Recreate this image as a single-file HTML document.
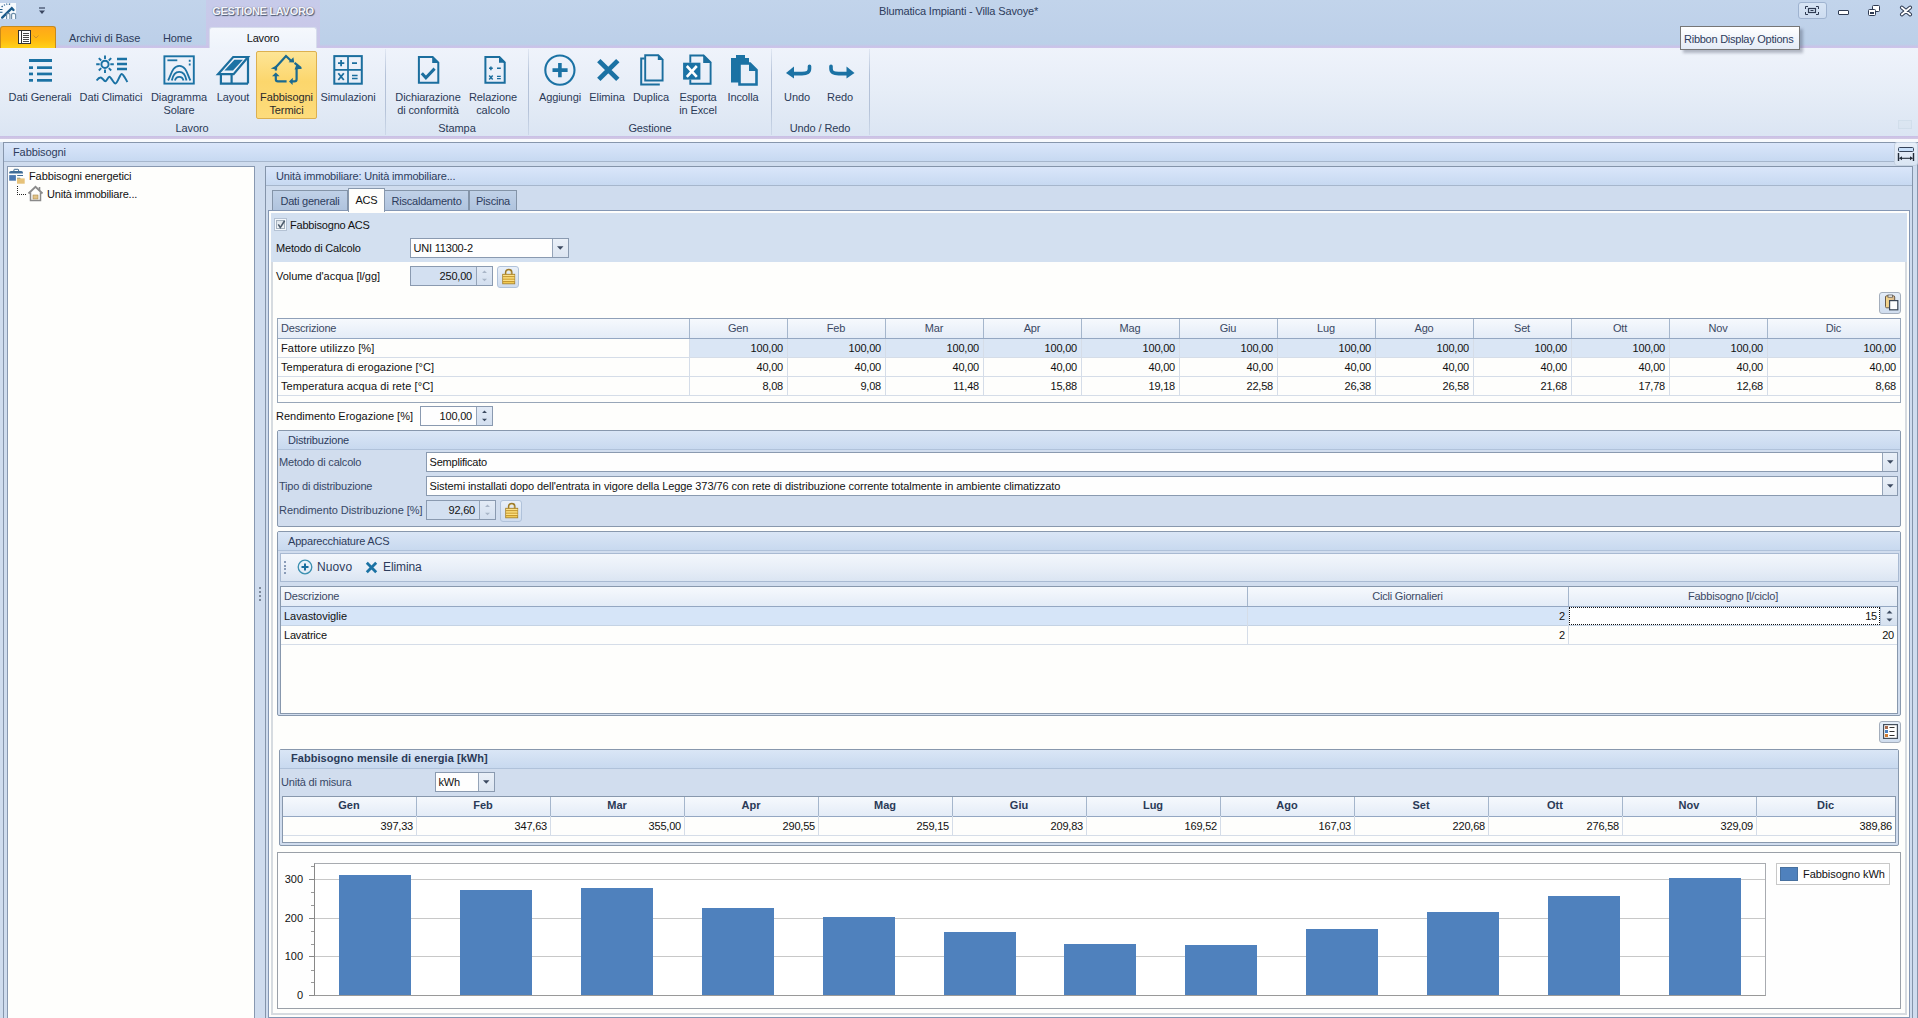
<!DOCTYPE html>
<html><head><meta charset="utf-8">
<style>
*{box-sizing:border-box;margin:0;padding:0}
html,body{width:1918px;height:1018px;overflow:hidden;background:#cfdcee;font-family:"Liberation Sans",sans-serif;font-size:11px;color:#1e1e1e}
.a{position:absolute}
.t{position:absolute;font-size:11px;line-height:13px;white-space:nowrap;letter-spacing:-0.2px;margin-top:1px}
.c{text-align:center}
.r{text-align:right}
.rb{color:#2b3a57;letter-spacing:-0.1px}
svg{position:absolute;overflow:visible}
</style></head><body>
<!-- TITLE BAR -->
<div class="a" style="left:0;top:0;width:1918px;height:48px;background:linear-gradient(#c2d4eb,#bdd0e9 80%,#b9d1e8)"></div>
<!-- contextual group -->
<div class="a" style="left:206px;top:0;width:114px;height:48px;background:linear-gradient(#c7cbea,#cac6e8)"></div>
<div class="t c" style="left:206px;top:4px;width:114px;font-weight:bold;color:#f4f4fa;text-shadow:1px 1px 1px #4a5870,0 0 1px #6a7890;letter-spacing:-0.3px">GESTIONE LAVORO</div>
<!-- app icon -->
<svg style="left:0;top:0" width="17" height="20" viewBox="0 0 17 20">
 <rect x="0" y="3" width="16" height="16" fill="#f6fafd"/>
 <path d="M2.2 17.6L11.8 8.2L13.5 10" stroke="#1a5a8a" stroke-width="2.4" stroke-linecap="round" fill="none"/>
 <path d="M1.6 6.9L2.7 6.1M3.9 5.3L5 4.7M6.4 4.4L7.2 3.8M9.4 4.9L9.6 3.5" stroke="#2a6090" stroke-width="1.3"/>
 <path d="M0 9.5H2.5M0 12.3H2.5" stroke="#1a5a8a" stroke-width="1.1"/>
 <path d="M6.6 19V14.6Q6.6 13.4 8.2 13.4Q9.9 13.4 9.9 14.6V19M11.6 19V14.6Q11.6 13.4 13.3 13.4Q15.6 13.4 15.6 14.6V19" stroke="#6a8aa6" stroke-width="1.1" fill="none"/>
</svg>
<!-- QAT -->
<svg style="left:38px;top:7px" width="8" height="8" viewBox="0 0 8 8"><path d="M1 1H7" stroke="#3a4660" stroke-width="1.2"/><path d="M1 3.5H7L4 7Z" fill="#3a4660"/></svg>
<div class="t rb" style="left:879px;top:4px;color:#2d3c5c;letter-spacing:-0.15px">Blumatica Impianti - Villa Savoye*</div>
<!-- window buttons -->
<div class="a" style="left:1798px;top:2px;width:29px;height:17px;border:1px solid #9fb3d0;border-radius:3px;background:linear-gradient(#d8e5f5,#cddcf0)"></div>
<svg style="left:1805px;top:6px" width="14" height="9" viewBox="0 0 14 9"><path d="M0.5 3V0.5H3 M11 0.5H13.5V3 M13.5 6V8.5H11 M3 8.5H0.5V6" stroke="#2f3b52" stroke-width="1" fill="none"/><rect x="3.5" y="2.5" width="7" height="4" fill="none" stroke="#2f3b52" stroke-width="1.2"/><rect x="5.5" y="4" width="3" height="1" fill="#2f3b52"/></svg>
<div class="a" style="left:1838px;top:10px;width:11px;height:5px;border:1px solid #2f3b52;border-radius:1px;background:#fff"></div>
<svg style="left:1868px;top:5px" width="12" height="11" viewBox="0 0 12 11"><rect x="4.5" y="0.5" width="7" height="6" rx="1" fill="#fff" stroke="#2f3b52"/><rect x="0.5" y="4.5" width="7" height="6" rx="1" fill="#fff" stroke="#2f3b52"/><rect x="2" y="7" width="4" height="2" fill="#2f3b52"/></svg>
<svg style="left:1899px;top:5px" width="14" height="12" viewBox="0 0 14 12"><path d="M2.8 2.5L11.2 9.5M11.2 2.5L2.8 9.5" stroke="#2f3b52" stroke-width="3.8" stroke-linecap="round"/><path d="M2.8 2.5L11.2 9.5M11.2 2.5L2.8 9.5" stroke="#fff" stroke-width="1.8" stroke-linecap="round"/></svg>

<!-- TABS ROW -->
<div class="a" style="left:0;top:26px;width:56px;height:22px;border:1px solid #c78a1c;border-bottom:none;border-radius:3px 3px 0 0;background:linear-gradient(#ffa71a,#ffb910 60%,#ffd21a)"></div>
<svg style="left:18px;top:30px" width="13" height="14" viewBox="0 0 13 14"><rect x="0.5" y="0.5" width="12" height="13" fill="#fff" stroke="#333"/><path d="M3.5 1V13" stroke="#333" stroke-width="1"/><path d="M5 3.5H11M5 5.5H11M5 7.5H11M5 9.5H11M5 11.5H11" stroke="#333" stroke-width="0.9"/></svg>
<svg style="left:33px;top:35px" width="6" height="4" viewBox="0 0 6 4"><path d="M0.5 0.5L3 3L5.5 0.5" stroke="#c88a30" stroke-width="0.9" fill="none"/></svg>
<div class="t rb" style="left:69px;top:31px;color:#2d3c5c">Archivi di Base</div>
<div class="t rb" style="left:163px;top:31px;color:#2d3c5c">Home</div>
<div class="a" style="left:56px;top:44px;width:1862px;height:4px;background:linear-gradient(rgba(200,190,232,0),#cbc2e8 70%,#cfc6ea)"></div>
<div class="a" style="left:209px;top:27px;width:108px;height:22px;border:1px solid #d6dcec;border-bottom:none;border-radius:3px 3px 0 0;background:linear-gradient(#f5f8fd,#eef3fb)"></div>
<div class="t c" style="left:209px;top:31px;width:108px;color:#111">Lavoro</div>

<!-- RIBBON BODY -->
<div class="a" style="left:0;top:48px;width:1918px;height:88px;background:linear-gradient(#eff3fb,#e6edf7 50%,#dbe5f3)"></div>
<div class="a" style="left:0;top:136px;width:1918px;height:3px;background:linear-gradient(#c9bfe6,#d3c9e4)"></div>
<div class="a" style="left:0;top:139px;width:1918px;height:3px;background:#f8fafd"></div>
<div class="a" style="left:1898px;top:120px;width:14px;height:9px;border:1px solid rgba(150,175,200,0.12);background:rgba(200,220,230,0.15)"></div>
<!-- ribbon buttons -->
<div class="a" style="left:256px;top:51px;width:61px;height:68px;border:1px solid #dcb050;border-radius:2px;background:linear-gradient(#fde596,#fcd66c 45%,#fddc7c)"></div>
<g></g>
<!-- Dati Generali -->
<svg style="left:28px;top:58px" width="25" height="25" viewBox="0 0 25 25" fill="#1b72a4">
<rect x="1" y="1" width="23" height="3"/><rect x="1" y="8.3" width="4" height="2.7"/><rect x="9" y="8.3" width="15" height="2.7"/>
<rect x="1" y="14.6" width="4" height="2.7"/><rect x="9" y="14.6" width="15" height="2.7"/><rect x="1" y="21" width="4" height="2.7"/><rect x="9" y="21" width="15" height="2.7"/></svg>
<div class="t c rb" style="left:0;top:90px;width:80px">Dati Generali</div>
<!-- Dati Climatici -->
<svg style="left:95px;top:54px" width="34" height="32" viewBox="0 0 34 32" fill="none" stroke="#1b72a4">
<circle cx="10" cy="10.3" r="3.6" stroke-width="2"/>
<path d="M10 1.5V5M10 15.5V19M1.2 10.3H4.7M15.3 10.3H18.8M3.8 4.1L6.2 6.5M13.8 14.1L16.2 16.5M3.8 16.5L6.2 14.1M13.8 6.5L16.2 4.1" stroke-width="1.9"/>
<path d="M22 5H32M22 10H32M22 15H32" stroke-width="2.3"/>
<path d="M1.6 26.5C3.5 24 5 23.3 6.3 23.7S9 27.3 10.3 27.3S13 22.7 14.5 22.8S18.5 29.5 20.5 29.5S25 19.8 26.7 19.9S30.5 25 32.4 28" stroke-width="2"/></svg>
<div class="t c rb" style="left:75px;top:90px;width:72px">Dati Climatici</div>
<!-- Diagramma Solare -->
<svg style="left:163px;top:55px" width="32" height="31" viewBox="0 0 32 31" fill="none" stroke="#1b72a4">
<rect x="1.4" y="1.3" width="29.4" height="27.3" stroke-width="1.9"/>
<path d="M4.4 5.3H14.3" stroke-width="1.8"/><path d="M26.7 4.7V6.7M26.7 8.6V10.6" stroke-width="1.8"/>
<path d="M5.1 25.5C8 20 9.5 10.8 16.4 10.8S24.5 20 27.4 25.5M8.8 25.5C10 19.5 12.5 16.8 16.2 16.8S22.5 19.5 23.5 25.5M11.9 25.5C12.5 23.5 14 21.9 16.2 21.9S20 23.5 20.5 25.5" stroke-width="1.8"/></svg>
<div class="t c rb" style="left:139px;top:90px;width:80px">Diagramma</div>
<div class="t c rb" style="left:139px;top:103px;width:80px">Solare</div>
<!-- Layout -->
<svg style="left:213px;top:50px" width="40" height="40" viewBox="0 0 40 40" fill="none" stroke="#1b6e9e" stroke-width="2.2">
<path d="M5 24.2L20.2 7H35L20.6 24.2Z" stroke-linejoin="miter"/><path d="M11.4 20.6L21.4 9.8H30L20 20.6Z" fill="#1b72a4" stroke="none"/>
<path d="M35 7V33.6M7.9 24.2V33.6H35M18.6 24.2V33.6"/></svg>
<div class="t c rb" style="left:203px;top:90px;width:60px">Layout</div>
<!-- Fabbisogni Termici -->
<svg style="left:266px;top:50px" width="40" height="40" viewBox="0 0 40 40" fill="none" stroke="#1b6a90" stroke-width="2.2">
<path d="M9.6 17.6L20 6L25 10.8"/><path d="M22.6 12.2L28.2 12.6L27.4 7.2Z" fill="#1b6a90" stroke="none"/>
<path d="M4.8 18.6L11 15.2L11.2 19.8Z" fill="#1b6a90" stroke="none"/><path d="M9.8 17V20.6" stroke-width="2"/>
<path d="M28.6 12.8L35 18.2"/><path d="M28.6 19.4L36 18.8L30.8 13.4Z" fill="#1b6a90" stroke="none"/>
<path d="M30.6 18.8V29.2Q30.6 31.4 28.4 31.4H26"/><path d="M23 31.6L26.8 27.8L26.6 35Z" fill="#1b6a90" stroke="none"/>
<path d="M20.6 31.4H12Q9.8 31.4 9.8 29.2V25.4"/><path d="M9.8 22.4L6 26.2H13.6Z" fill="#1b6a90" stroke="none"/></svg>
<div class="t c rb" style="left:256px;top:90px;width:61px;color:#2a2a2a">Fabbisogni</div>
<div class="t c rb" style="left:256px;top:103px;width:61px;color:#2a2a2a">Termici</div>
<!-- Simulazioni -->
<svg style="left:328px;top:50px" width="40" height="40" viewBox="0 0 40 40" fill="none" stroke="#1b6e9e">
<rect x="6.3" y="6.1" width="27.5" height="27.6" stroke-width="2"/><path d="M20 6V33.8M6 19.8H34" stroke-width="1.7"/>
<path d="M10 13.1H16.3M13.1 10V16.3M24 13.1H29" stroke-width="1.8"/><path d="M10.3 23.3L15.8 30M15.8 23.3L10.3 30" stroke-width="1.8"/><path d="M24 25.4H29.6M24 28.4H29.6" stroke-width="1.5"/></svg>
<div class="t c rb" style="left:318px;top:90px;width:60px">Simulazioni</div>
<!-- separators -->
<div class="a" style="left:385px;top:49px;width:1px;height:86px;background:linear-gradient(rgba(170,185,210,0.2),#b4c2d8 30%,#b4c2d8 70%,rgba(170,185,210,0.3))"></div>
<div class="a" style="left:528px;top:49px;width:1px;height:86px;background:linear-gradient(rgba(170,185,210,0.2),#b4c2d8 30%,#b4c2d8 70%,rgba(170,185,210,0.3))"></div>
<div class="a" style="left:771px;top:49px;width:1px;height:86px;background:linear-gradient(rgba(170,185,210,0.2),#b4c2d8 30%,#b4c2d8 70%,rgba(170,185,210,0.3))"></div>
<div class="a" style="left:869px;top:49px;width:1px;height:86px;background:linear-gradient(rgba(170,185,210,0.2),#b4c2d8 30%,#b4c2d8 70%,rgba(170,185,210,0.3))"></div>
<div class="t c rb" style="left:152px;top:121px;width:80px">Lavoro</div>
<!-- Dichiarazione -->
<svg style="left:410px;top:50px" width="40" height="40" viewBox="0 0 40 40" fill="none" stroke="#1b6e9e">
<path d="M8.9 6.9H22.6L28.3 12.6V32.8H8.9Z" stroke-width="2"/><path d="M22.2 6L29.2 13H22.2Z" fill="#1b6e9e" stroke="none"/>
<path d="M11.8 23.2L15.9 27.8L24.6 18.6" stroke-width="3"/></svg>
<div class="t c rb" style="left:388px;top:90px;width:80px">Dichiarazione</div>
<div class="t c rb" style="left:388px;top:103px;width:80px">di conformità</div>
<!-- Relazione -->
<svg style="left:476px;top:50px" width="40" height="40" viewBox="0 0 40 40" fill="none" stroke="#1b6e9e">
<path d="M9.4 7H23.4L28.7 12.5V32.8H9.4Z" stroke-width="2"/><path d="M23 6.1L29.6 12.8H23Z" fill="#1b6e9e" stroke="none"/>
<path d="M13 18.3H16.8M14.9 16.4V20.2M21 18.3H24.8" stroke-width="1.5"/><path d="M13.2 25.6L16.7 29.4M16.7 25.6L13.2 29.4" stroke-width="1.5"/><path d="M21 26.4H24.8M21 28.6H24.8" stroke-width="1.2"/></svg>
<div class="t c rb" style="left:453px;top:90px;width:80px">Relazione</div>
<div class="t c rb" style="left:453px;top:103px;width:80px">calcolo</div>
<div class="t c rb" style="left:417px;top:121px;width:80px">Stampa</div>
<!-- Aggiungi -->
<svg style="left:544px;top:55px" width="32" height="31" viewBox="0 0 32 31" fill="none" stroke="#1b72a4">
<circle cx="15.9" cy="15.1" r="14.6" stroke-width="2.1"/><path d="M8.5 15.1H23.6M15.9 8.1V22.2" stroke-width="3.6"/></svg>
<div class="t c rb" style="left:530px;top:90px;width:60px">Aggiungi</div>
<!-- Elimina -->
<svg style="left:596px;top:58px" width="25" height="24" viewBox="0 0 25 24" stroke="#1b72a4">
<path d="M2.8 2.6L21.8 21.4M21.8 2.6L2.8 21.4" stroke-width="4.8"/></svg>
<div class="t c rb" style="left:577px;top:90px;width:60px">Elimina</div>
<!-- Duplica -->
<svg style="left:636px;top:50px" width="40" height="40" viewBox="0 0 40 40" fill="none" stroke="#1b6e9e">
<path d="M5.2 8.4H8.6M5.2 7.5V34.4H23.8" stroke-width="2"/>
<path d="M9.2 5.3H22.3L26.6 9.6V30.5H9.2Z" stroke-width="1.9"/><path d="M21.8 4.4L27.5 10.1H21.8Z" fill="#1b6e9e" stroke="none"/></svg>
<div class="t c rb" style="left:621px;top:90px;width:60px">Duplica</div>
<!-- Esporta -->
<svg style="left:676px;top:50px" width="40" height="40" viewBox="0 0 40 40" fill="none" stroke="#1b6e9e">
<path d="M14.3 12.8V5.5H27.6L34.6 12.5V33.7H14.3V29.5" stroke-width="1.9"/><path d="M27.2 4.6L35.5 12.9H27.2Z" fill="#1b6e9e" stroke="none"/>
<rect x="7.1" y="12.7" width="17.3" height="16.9" fill="#1b72a4" stroke="none"/>
<path d="M10.8 16L20.8 26.8M20.8 16L10.8 26.8" stroke="#fff" stroke-width="2.6"/></svg>
<div class="t c rb" style="left:668px;top:90px;width:60px">Esporta</div>
<div class="t c rb" style="left:668px;top:103px;width:60px">in Excel</div>
<!-- Incolla -->
<svg style="left:730px;top:54px" width="28" height="32" viewBox="0 0 28 32" fill="none" stroke="#1b72a4">
<path d="M1 4H19V28.5H1Z" fill="#1b72a4" stroke="none"/><rect x="6" y="1" width="9" height="4" fill="#1b72a4" stroke="none"/>
<path d="M9.5 9.5H20L26.5 16V30.5H9.5Z" fill="#e9eff8" stroke-width="2.6"/><path d="M19 9L27 17H19Z" fill="#1b72a4" stroke="none"/></svg>
<div class="t c rb" style="left:713px;top:90px;width:60px">Incolla</div>
<div class="t c rb" style="left:610px;top:121px;width:80px">Gestione</div>
<!-- Undo -->
<svg style="left:785px;top:64px" width="28" height="15" viewBox="0 0 28 15" fill="#1b72a4">
<path d="M24.5 2.3V4.5C24.5 8.5 22 9.6 17 9.6H8" fill="none" stroke="#1b72a4" stroke-width="3.6" stroke-linecap="round"/><path d="M1 9L9 2.5V14.5Z"/></svg>
<div class="t c rb" style="left:767px;top:90px;width:60px">Undo</div>
<!-- Redo -->
<svg style="left:828px;top:64px" width="28" height="15" viewBox="0 0 28 15" fill="#1b72a4">
<path d="M3 2.3V4.5C3 8.5 5.5 9.6 10.5 9.6H19" fill="none" stroke="#1b72a4" stroke-width="3.6" stroke-linecap="round"/><path d="M26.5 9L18.5 2.5V14.5Z"/></svg>
<div class="t c rb" style="left:810px;top:90px;width:60px">Redo</div>
<div class="t c rb" style="left:770px;top:121px;width:100px">Undo / Redo</div>


<!-- TOOLTIP -->
<div class="a" style="left:1683px;top:29px;width:120px;height:24px;background:rgba(60,70,90,0.35);filter:blur(1.5px)"></div>
<div class="a" style="left:1680px;top:26px;width:120px;height:24px;border:1px solid #767676;background:linear-gradient(#ffffff,#e4ebf6)"></div>
<div class="t" style="left:1684px;top:32px;color:#2d3c5c;letter-spacing:-0.25px">Ribbon Display Options</div>

<!-- MAIN PANEL -->
<div class="a" style="left:3px;top:142px;width:1915px;height:876px;border:1px solid #8796ac;border-bottom:none;background:#cfdcee"></div>
<div class="a" style="left:4px;top:143px;width:1914px;height:19px;background:linear-gradient(#dae6fa,#c7d9f1);border-bottom:1px solid #a6b6cc"></div>
<div class="t rb" style="left:13px;top:145px;color:#2d3c5c">Fabbisogni</div>
<!--MAIN-->
<div class="a" style="left:1894px;top:142px;width:24px;height:24px;border:1px solid #c5d2e2;border-radius:3px;background:linear-gradient(#e8eff9,#dae5f3)"></div>
<svg style="left:1897px;top:146px" width="18" height="16" viewBox="0 0 18 16"><rect x="1.5" y="1.5" width="15" height="4" rx="1" fill="#c9e0fa" stroke="#354258" stroke-width="1"/><path d="M1.5 7V15M16.5 7V15" stroke="#222b38" stroke-width="1.4"/><path d="M2.5 12.3H15.5" stroke="#222b38" stroke-width="1.1"/><path d="M2.2 12.3L5 10.3V14.3Z M15.8 12.3L13 10.3V14.3Z" fill="#222b38"/></svg>
<div class="a" style="left:7px;top:166px;width:248px;height:852px;border:1px solid #8898b0;border-bottom:none;background:#fefefc"></div>
<svg style="left:6px;top:166px" width="20" height="20" viewBox="0 0 20 20"><path d="M7.9 5V4Q7.9 3.3 8.6 3.3H11.9Q12.6 3.3 12.6 4V5" stroke="#3d6890" stroke-width="1" fill="none"/><path d="M3.2 7.6V6.5Q3.2 5 5 5H15.2Q17 5 17 6.5V7.6Z" fill="#3f6c96"/><rect x="3.2" y="9.1" width="6.7" height="5.6" fill="#4a78b0"/><rect x="11.2" y="9" width="5.8" height="1" fill="#3f6c96"/><rect x="11" y="12.4" width="7.7" height="5.3" fill="#e6c27a"/><path d="M11 12.4V11.7H14L14.7 12.4Z" fill="#7a8060"/></svg>
<div class="t " style="left:29px;top:169.4px;color:#111;letter-spacing:-0.1px">Fabbisogni energetici</div>
<div class="a" style="left:17px;top:186px;width:1px;height:9px;border-left:1px dotted #222"></div>
<div class="a" style="left:17px;top:194px;width:9px;height:1px;border-top:1px dotted #222"></div>
<svg style="left:27px;top:185px" width="17" height="17" viewBox="0 0 17 17"><path d="M1.5 8.5L8.5 1.8L15.5 8.5" stroke="#8a8a8a" stroke-width="1.8" fill="none"/><path d="M12.5 2V5.5" stroke="#8a8a8a" stroke-width="1.6"/><path d="M3.5 7.5V15.5H13.5V7.5" stroke="#8a8a8a" stroke-width="1.5" fill="none"/><rect x="6" y="10" width="5" height="4" fill="#e3c386" stroke="#a88a50" stroke-width="0.6"/></svg>
<div class="t " style="left:47px;top:186.5px;color:#111">Unità immobiliare...</div>
<div class="a" style="left:259px;top:587px;width:2px;height:2px;background:#7d8a9c"></div>
<div class="a" style="left:259px;top:591px;width:2px;height:2px;background:#7d8a9c"></div>
<div class="a" style="left:259px;top:595px;width:2px;height:2px;background:#7d8a9c"></div>
<div class="a" style="left:259px;top:599px;width:2px;height:2px;background:#7d8a9c"></div>
<div class="a" style="left:265px;top:166px;width:1648px;height:852px;border:1px solid #8494aa;border-bottom:none;background:#cfdcee"></div>
<div class="a" style="left:266px;top:167px;width:1646px;height:19px;background:linear-gradient(#dae6fa,#c7d9f1);border-bottom:1px solid #a6b6cc"></div>
<div class="t " style="left:276px;top:168.7px;color:#2d3c5c;letter-spacing:-0.15px">Unità immobiliare: Unità immobiliare...</div>
<div class="a" style="left:272px;top:190px;width:76px;height:21px;border:1px solid #8494a8;border-bottom:none;background:linear-gradient(#c0d1e7,#afc3dd)"></div>
<div class="t c " style="left:272px;width:76px;top:193.7px;color:#2d3c5c">Dati generali</div>
<div class="a" style="left:384px;top:190px;width:85px;height:21px;border:1px solid #8494a8;border-bottom:none;background:linear-gradient(#c0d1e7,#afc3dd)"></div>
<div class="t c " style="left:384px;width:85px;top:193.7px;color:#2d3c5c">Riscaldamento</div>
<div class="a" style="left:469px;top:190px;width:48px;height:21px;border:1px solid #8494a8;border-bottom:none;background:linear-gradient(#c0d1e7,#afc3dd)"></div>
<div class="t c " style="left:469px;width:48px;top:193.7px;color:#2d3c5c">Piscina</div>
<div class="a" style="left:268px;top:210px;width:1642px;height:808px;border:1px solid #8497b4;background:#fefefc"></div>
<div class="a" style="left:348px;top:188px;width:37px;height:24px;border:1px solid #8898ad;border-bottom:none;background:#fefefc"></div>
<div class="t c " style="left:348px;width:37px;top:192.7px;color:#111">ACS</div>
<div class="a" style="left:271px;top:213px;width:1636px;height:802px;border:2px solid #d6dbe0;border-top:none"></div>
<div class="a" style="left:271px;top:213px;width:1636px;height:49px;background:#d3e0f0"></div>
<div class="a" style="left:274px;top:218px;width:13px;height:13px;border:1px solid #b4c2d4;background:#f4f8fc"></div>
<div class="a" style="left:276px;top:220px;width:9px;height:9px;border:1px solid #a4b0bc;background:linear-gradient(#dde4ea,#f2f5f8)"></div>
<svg style="left:276px;top:219px" width="11" height="11" viewBox="0 0 11 11"><path d="M2.3 5.3L4.3 8.6L8.6 1.8" stroke="#4e5c6c" stroke-width="1.6" fill="none"/></svg>
<div class="t " style="left:290px;top:218.2px;color:#111">Fabbisogno ACS</div>
<div class="t " style="left:276px;top:241.4px;color:#111">Metodo di Calcolo</div>
<div class="a" style="left:410px;top:238px;width:159px;height:20px;border:1px solid #8a9ab0;background:#fefefe"></div>
<div class="a" style="left:552px;top:239px;width:16px;height:18px;border-left:1px solid #95a4b8;background:linear-gradient(#eaf0f8,#dce5f1)"></div>
<svg style="left:556px;top:246px" width="8" height="5" viewBox="0 0 8 5"><path d="M1 0.3H7.5L4.25 3.8Z" fill="#3c4a60"/></svg>
<div class="t " style="left:413.5px;top:241.2px;color:#111">UNI 11300-2</div>
<div class="t " style="left:276px;top:268.9px;color:#111;letter-spacing:-0.04px">Volume d'acqua [l/gg]</div>
<div class="a" style="left:410px;top:266px;width:83px;height:20px;border:1px solid #8a9ab0;background:#d3e0f1"></div>
<div class="a" style="left:476px;top:267px;width:16px;height:18px;border-left:1px solid #95a4b8;background:linear-gradient(#e3ebf6,#d3dfef)"></div>
<svg style="left:481px;top:269px" width="7" height="14" viewBox="0 0 7 14"><path d="M1 4L3.5 1.5L6 4Z M1 9.8L3.5 12.3L6 9.8Z" fill="#a9b6c8"/></svg>
<div class="t r " style="left:272px;width:200px;top:268.9px;color:#111">250,00</div>
<div class="a" style="left:497px;top:266px;width:22px;height:22px;border:1px solid #b0c2da;border-radius:3px;background:linear-gradient(#e9f0f9,#cfdcee)"></div>
<svg style="left:502px;top:267px" width="14" height="18" viewBox="0 0 14 18"><path d="M3.7 8V5.2C3.7 1.8 9.7 1.8 9.7 5.2V8" stroke="#9c7a2a" stroke-width="1.7" fill="none"/><path d="M4.5 7V5.5C4.5 3 8.9 3 8.9 5.5V7" stroke="#f4e0a0" stroke-width="0.6" fill="none"/><rect x="0.7" y="7.3" width="12" height="9.5" fill="#f2ca52" stroke="#a88430" stroke-width="0.9"/><path d="M1 9.6H12.5M1 12H12.5M1 14.4H12.5" stroke="#c0922c" stroke-width="1"/><path d="M1 8.6H12.5M1 11H12.5M1 13.4H12.5" stroke="#ffeaa0" stroke-width="0.8"/></svg>
<div class="a" style="left:1879px;top:292px;width:22px;height:22px;border:1px solid #a4aebc;border-radius:3px;background:linear-gradient(#e4edf8,#d0ddee)"></div>
<svg style="left:1884px;top:294px" width="15" height="17" viewBox="0 0 15 17"><defs><linearGradient id="cb" x1="0" x2="1"><stop offset="0" stop-color="#f6d88a"/><stop offset="1" stop-color="#d8b890"/></linearGradient></defs><rect x="1.5" y="1.8" width="9.2" height="12" rx="1.2" fill="url(#cb)" stroke="#6a5a48" stroke-width="1"/><rect x="4" y="1" width="4.5" height="2.2" fill="#fff" stroke="#555" stroke-width="0.8"/><rect x="5.6" y="6.6" width="8.2" height="9.2" fill="#fff" stroke="#3a4656" stroke-width="1.2"/></svg>
<div class="a" style="left:277px;top:318px;width:1624px;height:85px;border:1px solid #98a6b8;border-top-color:#8fa0b8;background:#fefefc"></div>
<div class="a" style="left:278px;top:319px;width:1622px;height:20px;background:linear-gradient(#f6f9fd,#e4ecf7);border-bottom:1px solid #94a7c2"></div>
<div class="t " style="left:281px;top:321.2px;color:#3a4863">Descrizione</div>
<div class="a" style="left:689px;top:319px;width:1px;height:19px;background:#a5b6cc"></div>
<div class="t c " style="left:689px;width:98px;top:321.2px;color:#3a4863">Gen</div>
<div class="a" style="left:787px;top:319px;width:1px;height:19px;background:#a5b6cc"></div>
<div class="t c " style="left:787px;width:98px;top:321.2px;color:#3a4863">Feb</div>
<div class="a" style="left:885px;top:319px;width:1px;height:19px;background:#a5b6cc"></div>
<div class="t c " style="left:885px;width:98px;top:321.2px;color:#3a4863">Mar</div>
<div class="a" style="left:983px;top:319px;width:1px;height:19px;background:#a5b6cc"></div>
<div class="t c " style="left:983px;width:98px;top:321.2px;color:#3a4863">Apr</div>
<div class="a" style="left:1081px;top:319px;width:1px;height:19px;background:#a5b6cc"></div>
<div class="t c " style="left:1081px;width:98px;top:321.2px;color:#3a4863">Mag</div>
<div class="a" style="left:1179px;top:319px;width:1px;height:19px;background:#a5b6cc"></div>
<div class="t c " style="left:1179px;width:98px;top:321.2px;color:#3a4863">Giu</div>
<div class="a" style="left:1277px;top:319px;width:1px;height:19px;background:#a5b6cc"></div>
<div class="t c " style="left:1277px;width:98px;top:321.2px;color:#3a4863">Lug</div>
<div class="a" style="left:1375px;top:319px;width:1px;height:19px;background:#a5b6cc"></div>
<div class="t c " style="left:1375px;width:98px;top:321.2px;color:#3a4863">Ago</div>
<div class="a" style="left:1473px;top:319px;width:1px;height:19px;background:#a5b6cc"></div>
<div class="t c " style="left:1473px;width:98px;top:321.2px;color:#3a4863">Set</div>
<div class="a" style="left:1571px;top:319px;width:1px;height:19px;background:#a5b6cc"></div>
<div class="t c " style="left:1571px;width:98px;top:321.2px;color:#3a4863">Ott</div>
<div class="a" style="left:1669px;top:319px;width:1px;height:19px;background:#a5b6cc"></div>
<div class="t c " style="left:1669px;width:98px;top:321.2px;color:#3a4863">Nov</div>
<div class="a" style="left:1767px;top:319px;width:1px;height:19px;background:#a5b6cc"></div>
<div class="t c " style="left:1767px;width:133px;top:321.2px;color:#3a4863">Dic</div>
<div class="a" style="left:690px;top:339px;width:1210px;height:18px;background:#dae6f5"></div>
<div class="a" style="left:278px;top:357px;width:1622px;height:1px;background:#d5dde8"></div>
<div class="t " style="left:281px;top:341.0px;color:#111;letter-spacing:0.15px">Fattore utilizzo [%]</div>
<div class="a" style="left:689px;top:339px;width:1px;height:18px;background:#d5dde8"></div>
<div class="t r " style="left:583px;width:200px;top:341.0px;color:#111">100,00</div>
<div class="a" style="left:787px;top:339px;width:1px;height:18px;background:#d5dde8"></div>
<div class="t r " style="left:681px;width:200px;top:341.0px;color:#111">100,00</div>
<div class="a" style="left:885px;top:339px;width:1px;height:18px;background:#d5dde8"></div>
<div class="t r " style="left:779px;width:200px;top:341.0px;color:#111">100,00</div>
<div class="a" style="left:983px;top:339px;width:1px;height:18px;background:#d5dde8"></div>
<div class="t r " style="left:877px;width:200px;top:341.0px;color:#111">100,00</div>
<div class="a" style="left:1081px;top:339px;width:1px;height:18px;background:#d5dde8"></div>
<div class="t r " style="left:975px;width:200px;top:341.0px;color:#111">100,00</div>
<div class="a" style="left:1179px;top:339px;width:1px;height:18px;background:#d5dde8"></div>
<div class="t r " style="left:1073px;width:200px;top:341.0px;color:#111">100,00</div>
<div class="a" style="left:1277px;top:339px;width:1px;height:18px;background:#d5dde8"></div>
<div class="t r " style="left:1171px;width:200px;top:341.0px;color:#111">100,00</div>
<div class="a" style="left:1375px;top:339px;width:1px;height:18px;background:#d5dde8"></div>
<div class="t r " style="left:1269px;width:200px;top:341.0px;color:#111">100,00</div>
<div class="a" style="left:1473px;top:339px;width:1px;height:18px;background:#d5dde8"></div>
<div class="t r " style="left:1367px;width:200px;top:341.0px;color:#111">100,00</div>
<div class="a" style="left:1571px;top:339px;width:1px;height:18px;background:#d5dde8"></div>
<div class="t r " style="left:1465px;width:200px;top:341.0px;color:#111">100,00</div>
<div class="a" style="left:1669px;top:339px;width:1px;height:18px;background:#d5dde8"></div>
<div class="t r " style="left:1563px;width:200px;top:341.0px;color:#111">100,00</div>
<div class="a" style="left:1767px;top:339px;width:1px;height:18px;background:#d5dde8"></div>
<div class="t r " style="left:1696px;width:200px;top:341.0px;color:#111">100,00</div>
<div class="a" style="left:278px;top:376px;width:1622px;height:1px;background:#d5dde8"></div>
<div class="t " style="left:281px;top:360.0px;color:#111;letter-spacing:0.02px">Temperatura di erogazione [°C]</div>
<div class="a" style="left:689px;top:358px;width:1px;height:18px;background:#d5dde8"></div>
<div class="t r " style="left:583px;width:200px;top:360.0px;color:#111">40,00</div>
<div class="a" style="left:787px;top:358px;width:1px;height:18px;background:#d5dde8"></div>
<div class="t r " style="left:681px;width:200px;top:360.0px;color:#111">40,00</div>
<div class="a" style="left:885px;top:358px;width:1px;height:18px;background:#d5dde8"></div>
<div class="t r " style="left:779px;width:200px;top:360.0px;color:#111">40,00</div>
<div class="a" style="left:983px;top:358px;width:1px;height:18px;background:#d5dde8"></div>
<div class="t r " style="left:877px;width:200px;top:360.0px;color:#111">40,00</div>
<div class="a" style="left:1081px;top:358px;width:1px;height:18px;background:#d5dde8"></div>
<div class="t r " style="left:975px;width:200px;top:360.0px;color:#111">40,00</div>
<div class="a" style="left:1179px;top:358px;width:1px;height:18px;background:#d5dde8"></div>
<div class="t r " style="left:1073px;width:200px;top:360.0px;color:#111">40,00</div>
<div class="a" style="left:1277px;top:358px;width:1px;height:18px;background:#d5dde8"></div>
<div class="t r " style="left:1171px;width:200px;top:360.0px;color:#111">40,00</div>
<div class="a" style="left:1375px;top:358px;width:1px;height:18px;background:#d5dde8"></div>
<div class="t r " style="left:1269px;width:200px;top:360.0px;color:#111">40,00</div>
<div class="a" style="left:1473px;top:358px;width:1px;height:18px;background:#d5dde8"></div>
<div class="t r " style="left:1367px;width:200px;top:360.0px;color:#111">40,00</div>
<div class="a" style="left:1571px;top:358px;width:1px;height:18px;background:#d5dde8"></div>
<div class="t r " style="left:1465px;width:200px;top:360.0px;color:#111">40,00</div>
<div class="a" style="left:1669px;top:358px;width:1px;height:18px;background:#d5dde8"></div>
<div class="t r " style="left:1563px;width:200px;top:360.0px;color:#111">40,00</div>
<div class="a" style="left:1767px;top:358px;width:1px;height:18px;background:#d5dde8"></div>
<div class="t r " style="left:1696px;width:200px;top:360.0px;color:#111">40,00</div>
<div class="a" style="left:278px;top:395px;width:1622px;height:1px;background:#d5dde8"></div>
<div class="t " style="left:281px;top:379.0px;color:#111;letter-spacing:0.08px">Temperatura acqua di rete [°C]</div>
<div class="a" style="left:689px;top:377px;width:1px;height:18px;background:#d5dde8"></div>
<div class="t r " style="left:583px;width:200px;top:379.0px;color:#111">8,08</div>
<div class="a" style="left:787px;top:377px;width:1px;height:18px;background:#d5dde8"></div>
<div class="t r " style="left:681px;width:200px;top:379.0px;color:#111">9,08</div>
<div class="a" style="left:885px;top:377px;width:1px;height:18px;background:#d5dde8"></div>
<div class="t r " style="left:779px;width:200px;top:379.0px;color:#111">11,48</div>
<div class="a" style="left:983px;top:377px;width:1px;height:18px;background:#d5dde8"></div>
<div class="t r " style="left:877px;width:200px;top:379.0px;color:#111">15,88</div>
<div class="a" style="left:1081px;top:377px;width:1px;height:18px;background:#d5dde8"></div>
<div class="t r " style="left:975px;width:200px;top:379.0px;color:#111">19,18</div>
<div class="a" style="left:1179px;top:377px;width:1px;height:18px;background:#d5dde8"></div>
<div class="t r " style="left:1073px;width:200px;top:379.0px;color:#111">22,58</div>
<div class="a" style="left:1277px;top:377px;width:1px;height:18px;background:#d5dde8"></div>
<div class="t r " style="left:1171px;width:200px;top:379.0px;color:#111">26,38</div>
<div class="a" style="left:1375px;top:377px;width:1px;height:18px;background:#d5dde8"></div>
<div class="t r " style="left:1269px;width:200px;top:379.0px;color:#111">26,58</div>
<div class="a" style="left:1473px;top:377px;width:1px;height:18px;background:#d5dde8"></div>
<div class="t r " style="left:1367px;width:200px;top:379.0px;color:#111">21,68</div>
<div class="a" style="left:1571px;top:377px;width:1px;height:18px;background:#d5dde8"></div>
<div class="t r " style="left:1465px;width:200px;top:379.0px;color:#111">17,78</div>
<div class="a" style="left:1669px;top:377px;width:1px;height:18px;background:#d5dde8"></div>
<div class="t r " style="left:1563px;width:200px;top:379.0px;color:#111">12,68</div>
<div class="a" style="left:1767px;top:377px;width:1px;height:18px;background:#d5dde8"></div>
<div class="t r " style="left:1696px;width:200px;top:379.0px;color:#111">8,68</div>
<div class="t " style="left:276px;top:409.2px;color:#111;letter-spacing:0">Rendimento Erogazione [%]</div>
<div class="a" style="left:420px;top:406px;width:73px;height:20px;border:1px solid #8a9ab0;background:#fefefe"></div>
<div class="a" style="left:476px;top:407px;width:16px;height:18px;border-left:1px solid #95a4b8;background:linear-gradient(#e3ebf6,#d3dfef)"></div>
<svg style="left:481px;top:409px" width="7" height="14" viewBox="0 0 7 14"><path d="M1 4L3.5 1.5L6 4Z M1 9.8L3.5 12.3L6 9.8Z" fill="#3c4a60"/></svg>
<div class="t r " style="left:272px;width:200px;top:408.9px;color:#111">100,00</div>
<div class="a" style="left:277px;top:430px;width:1624px;height:97px;border:1px solid #8898ad;border-radius:2px;background:#d1ddee"></div>
<div class="a" style="left:278px;top:431px;width:1622px;height:19px;background:linear-gradient(#dae6f6,#c8d9ef);border-bottom:1px solid #b0c2da"></div>
<div class="t " style="left:288px;top:433.2px;color:#2d3c5c">Distribuzione</div>
<div class="t " style="left:279px;top:455.2px;color:#374866">Metodo di calcolo</div>
<div class="a" style="left:426px;top:452px;width:1472px;height:20px;border:1px solid #8a9ab0;background:#fefefe"></div>
<div class="a" style="left:1882px;top:453px;width:15px;height:18px;border-left:1px solid #95a4b8;background:linear-gradient(#eaf0f8,#dce5f1)"></div>
<svg style="left:1886px;top:460px" width="8" height="5" viewBox="0 0 8 5"><path d="M1 0.3H7.5L4.25 3.8Z" fill="#3c4a60"/></svg>
<div class="t " style="left:429.5px;top:455.2px;color:#111">Semplificato</div>
<div class="t " style="left:279px;top:479.2px;color:#374866">Tipo di distribuzione</div>
<div class="a" style="left:426px;top:476px;width:1472px;height:20px;border:1px solid #8a9ab0;background:#fefefe"></div>
<div class="a" style="left:1882px;top:477px;width:15px;height:18px;border-left:1px solid #95a4b8;background:linear-gradient(#eaf0f8,#dce5f1)"></div>
<svg style="left:1886px;top:484px" width="8" height="5" viewBox="0 0 8 5"><path d="M1 0.3H7.5L4.25 3.8Z" fill="#3c4a60"/></svg>
<div class="t " style="left:429.5px;top:479.2px;color:#111;letter-spacing:-0.08px">Sistemi installati dopo dell'entrata in vigore della Legge 373/76 con rete di distribuzione corrente totalmente in ambiente climatizzato</div>
<div class="t " style="left:279px;top:503.2px;color:#374866;letter-spacing:-0.05px">Rendimento Distribuzione [%]</div>
<div class="a" style="left:426px;top:500px;width:70px;height:20px;border:1px solid #8a9ab0;background:#d3e0f1"></div>
<div class="a" style="left:479px;top:501px;width:16px;height:18px;border-left:1px solid #95a4b8;background:linear-gradient(#e3ebf6,#d3dfef)"></div>
<svg style="left:484px;top:503px" width="7" height="14" viewBox="0 0 7 14"><path d="M1 4L3.5 1.5L6 4Z M1 9.8L3.5 12.3L6 9.8Z" fill="#a9b6c8"/></svg>
<div class="t r " style="left:275px;width:200px;top:502.9px;color:#111">92,60</div>
<div class="a" style="left:500px;top:500px;width:22px;height:22px;border:1px solid #b0c2da;border-radius:3px;background:linear-gradient(#e9f0f9,#cfdcee)"></div>
<svg style="left:505px;top:501px" width="14" height="18" viewBox="0 0 14 18"><path d="M3.7 8V5.2C3.7 1.8 9.7 1.8 9.7 5.2V8" stroke="#9c7a2a" stroke-width="1.7" fill="none"/><path d="M4.5 7V5.5C4.5 3 8.9 3 8.9 5.5V7" stroke="#f4e0a0" stroke-width="0.6" fill="none"/><rect x="0.7" y="7.3" width="12" height="9.5" fill="#f2ca52" stroke="#a88430" stroke-width="0.9"/><path d="M1 9.6H12.5M1 12H12.5M1 14.4H12.5" stroke="#c0922c" stroke-width="1"/><path d="M1 8.6H12.5M1 11H12.5M1 13.4H12.5" stroke="#ffeaa0" stroke-width="0.8"/></svg>
<div class="a" style="left:277px;top:531px;width:1624px;height:185px;border:1px solid #8898ad;border-radius:2px;background:#d1ddee"></div>
<div class="a" style="left:278px;top:532px;width:1622px;height:19px;background:linear-gradient(#dae6f6,#c8d9ef);border-bottom:1px solid #b0c2da"></div>
<div class="t " style="left:288px;top:534.2px;color:#2d3c5c">Apparecchiature ACS</div>
<div class="a" style="left:280px;top:553px;width:1619px;height:29px;border:1px solid #a9bad2;background:linear-gradient(#f3f7fc,#e6edf7 60%,#dbe5f2)"></div>
<div class="a" style="left:284px;top:561.0px;width:2px;height:2px;background:#8a9cb8"></div>
<div class="a" style="left:284px;top:564.5px;width:2px;height:2px;background:#8a9cb8"></div>
<div class="a" style="left:284px;top:568.0px;width:2px;height:2px;background:#8a9cb8"></div>
<div class="a" style="left:284px;top:571.5px;width:2px;height:2px;background:#8a9cb8"></div>
<svg style="left:297px;top:559px" width="16" height="16" viewBox="0 0 16 16"><circle cx="8" cy="8" r="6.8" fill="none" stroke="#3a8fb0" stroke-width="1.3"/><path d="M4.5 8H11.5M8 4.5V11.5" stroke="#1b6e9e" stroke-width="2"/></svg>
<div class="t " style="left:317px;top:560.2px;color:#2d3c5c;font-size:12px;letter-spacing:0.1px">Nuovo</div>
<svg style="left:365px;top:561px" width="13" height="13" viewBox="0 0 13 13"><path d="M1.8 1.8L11.2 11.2M11.2 1.8L1.8 11.2" stroke="#1b72a4" stroke-width="2.8"/></svg>
<div class="t " style="left:383px;top:560.2px;color:#2d3c5c;font-size:12px;letter-spacing:-0.1px">Elimina</div>
<div class="a" style="left:280px;top:586px;width:1618px;height:128px;border:1px solid #8898ad;background:#fefefc"></div>
<div class="a" style="left:281px;top:587px;width:1616px;height:20px;background:linear-gradient(#f6f9fd,#e4ecf7);border-bottom:1px solid #94a7c2"></div>
<div class="t " style="left:284px;top:589.2px;color:#3a4863">Descrizione</div>
<div class="a" style="left:1247px;top:587px;width:1px;height:19px;background:#a5b6cc"></div>
<div class="t c " style="left:1247px;width:321px;top:589.2px;color:#3a4863">Cicli Giornalieri</div>
<div class="a" style="left:1568px;top:587px;width:1px;height:19px;background:#a5b6cc"></div>
<div class="t c " style="left:1568px;width:330px;top:589.2px;color:#3a4863">Fabbisogno [l/ciclo]</div>
<div class="a" style="left:281px;top:607px;width:1616px;height:19px;background:#d6e5f8;border-bottom:1px solid #c5d3e4"></div>
<div class="a" style="left:281px;top:626px;width:1616px;height:19px;border-bottom:1px solid #d5dde8"></div>
<div class="a" style="left:1247px;top:607px;width:1px;height:38px;background:#d5dde8"></div>
<div class="a" style="left:1568px;top:607px;width:1px;height:38px;background:#d5dde8"></div>
<div class="t " style="left:284px;top:609.2px;color:#111;letter-spacing:-0.05px">Lavastoviglie</div>
<div class="t " style="left:284px;top:628.2px;color:#111">Lavatrice</div>
<div class="t r " style="left:1365px;width:200px;top:609.2px;color:#111">2</div>
<div class="t r " style="left:1365px;width:200px;top:628.2px;color:#111">2</div>
<div class="a" style="left:1569px;top:607px;width:311px;height:18px;border:1px dotted #111;background:#fff"></div>
<div class="a" style="left:1880px;top:607px;width:17px;height:18px;border-left:1px solid #b4c3d8;background:linear-gradient(#e6eef8,#d6e1ef)"></div>
<svg style="left:1886px;top:610px" width="7" height="12" viewBox="0 0 7 12"><path d="M0.5 3.5L3.5 0.5L6.5 3.5Z M0.5 8.5L3.5 11.5L6.5 8.5Z" fill="#3c4a60"/></svg>
<div class="t r " style="left:1677px;width:200px;top:609.2px;color:#111">15</div>
<div class="t r " style="left:1694px;width:200px;top:628.2px;color:#111">20</div>
<div class="a" style="left:1879px;top:721px;width:22px;height:22px;border:1px solid #a4aebc;border-radius:3px;background:linear-gradient(#e4edf8,#d0ddee)"></div>
<svg style="left:1883px;top:724px" width="15" height="15" viewBox="0 0 15 15"><rect x="0.6" y="0.6" width="13.8" height="13.8" fill="#fff" stroke="#454f5c" stroke-width="1.2"/><rect x="2" y="2" width="3" height="3" fill="#a86a4c"/><rect x="2" y="6" width="3" height="3" fill="#4a80c0"/><rect x="2" y="10" width="3" height="3" fill="#d07a30"/><path d="M6.5 3.5H11.5M6.5 7.5H11.5M6.5 11.5H11.5" stroke="#333" stroke-width="1.1"/></svg>
<div class="a" style="left:279px;top:749px;width:1620px;height:97px;border:1px solid #8898ad;border-radius:2px;background:#d1ddee"></div>
<div class="a" style="left:280px;top:750px;width:1618px;height:19px;background:linear-gradient(#dae6f6,#c8d9ef);border-bottom:1px solid #b0c2da"></div>
<div class="t " style="left:291px;top:750.7px;color:#2a3a57;font-weight:bold;letter-spacing:0.05px">Fabbisogno mensile di energia [kWh]</div>
<div class="t " style="left:281px;top:775.2px;color:#374866">Unità di misura</div>
<div class="a" style="left:435px;top:772px;width:60px;height:20px;border:1px solid #8a9ab0;background:#fefefe"></div>
<div class="a" style="left:478px;top:773px;width:16px;height:18px;border-left:1px solid #95a4b8;background:linear-gradient(#eaf0f8,#dce5f1)"></div>
<svg style="left:482px;top:780px" width="8" height="5" viewBox="0 0 8 5"><path d="M1 0.3H7.5L4.25 3.8Z" fill="#3c4a60"/></svg>
<div class="t " style="left:438.5px;top:775.2px;color:#111">kWh</div>
<div class="a" style="left:282px;top:796px;width:1614px;height:47px;border:1px solid #8898ad;background:#fefefc"></div>
<div class="a" style="left:283px;top:797px;width:1612px;height:20px;background:linear-gradient(#f6f9fd,#e4ecf7);border-bottom:1px solid #94a7c2"></div>
<div class="t c " style="left:282px;width:134px;top:798.2px;color:#2a3a57;font-weight:bold;letter-spacing:0">Gen</div>
<div class="t r " style="left:213px;width:200px;top:819.2px;color:#111">397,33</div>
<div class="a" style="left:416px;top:797px;width:1px;height:19px;background:#a5b6cc"></div>
<div class="a" style="left:416px;top:816px;width:1px;height:20px;background:#d5dde8"></div>
<div class="t c " style="left:416px;width:134px;top:798.2px;color:#2a3a57;font-weight:bold;letter-spacing:0">Feb</div>
<div class="t r " style="left:347px;width:200px;top:819.2px;color:#111">347,63</div>
<div class="a" style="left:550px;top:797px;width:1px;height:19px;background:#a5b6cc"></div>
<div class="a" style="left:550px;top:816px;width:1px;height:20px;background:#d5dde8"></div>
<div class="t c " style="left:550px;width:134px;top:798.2px;color:#2a3a57;font-weight:bold;letter-spacing:0">Mar</div>
<div class="t r " style="left:481px;width:200px;top:819.2px;color:#111">355,00</div>
<div class="a" style="left:684px;top:797px;width:1px;height:19px;background:#a5b6cc"></div>
<div class="a" style="left:684px;top:816px;width:1px;height:20px;background:#d5dde8"></div>
<div class="t c " style="left:684px;width:134px;top:798.2px;color:#2a3a57;font-weight:bold;letter-spacing:0">Apr</div>
<div class="t r " style="left:615px;width:200px;top:819.2px;color:#111">290,55</div>
<div class="a" style="left:818px;top:797px;width:1px;height:19px;background:#a5b6cc"></div>
<div class="a" style="left:818px;top:816px;width:1px;height:20px;background:#d5dde8"></div>
<div class="t c " style="left:818px;width:134px;top:798.2px;color:#2a3a57;font-weight:bold;letter-spacing:0">Mag</div>
<div class="t r " style="left:749px;width:200px;top:819.2px;color:#111">259,15</div>
<div class="a" style="left:952px;top:797px;width:1px;height:19px;background:#a5b6cc"></div>
<div class="a" style="left:952px;top:816px;width:1px;height:20px;background:#d5dde8"></div>
<div class="t c " style="left:952px;width:134px;top:798.2px;color:#2a3a57;font-weight:bold;letter-spacing:0">Giu</div>
<div class="t r " style="left:883px;width:200px;top:819.2px;color:#111">209,83</div>
<div class="a" style="left:1086px;top:797px;width:1px;height:19px;background:#a5b6cc"></div>
<div class="a" style="left:1086px;top:816px;width:1px;height:20px;background:#d5dde8"></div>
<div class="t c " style="left:1086px;width:134px;top:798.2px;color:#2a3a57;font-weight:bold;letter-spacing:0">Lug</div>
<div class="t r " style="left:1017px;width:200px;top:819.2px;color:#111">169,52</div>
<div class="a" style="left:1220px;top:797px;width:1px;height:19px;background:#a5b6cc"></div>
<div class="a" style="left:1220px;top:816px;width:1px;height:20px;background:#d5dde8"></div>
<div class="t c " style="left:1220px;width:134px;top:798.2px;color:#2a3a57;font-weight:bold;letter-spacing:0">Ago</div>
<div class="t r " style="left:1151px;width:200px;top:819.2px;color:#111">167,03</div>
<div class="a" style="left:1354px;top:797px;width:1px;height:19px;background:#a5b6cc"></div>
<div class="a" style="left:1354px;top:816px;width:1px;height:20px;background:#d5dde8"></div>
<div class="t c " style="left:1354px;width:134px;top:798.2px;color:#2a3a57;font-weight:bold;letter-spacing:0">Set</div>
<div class="t r " style="left:1285px;width:200px;top:819.2px;color:#111">220,68</div>
<div class="a" style="left:1488px;top:797px;width:1px;height:19px;background:#a5b6cc"></div>
<div class="a" style="left:1488px;top:816px;width:1px;height:20px;background:#d5dde8"></div>
<div class="t c " style="left:1488px;width:134px;top:798.2px;color:#2a3a57;font-weight:bold;letter-spacing:0">Ott</div>
<div class="t r " style="left:1419px;width:200px;top:819.2px;color:#111">276,58</div>
<div class="a" style="left:1622px;top:797px;width:1px;height:19px;background:#a5b6cc"></div>
<div class="a" style="left:1622px;top:816px;width:1px;height:20px;background:#d5dde8"></div>
<div class="t c " style="left:1622px;width:134px;top:798.2px;color:#2a3a57;font-weight:bold;letter-spacing:0">Nov</div>
<div class="t r " style="left:1553px;width:200px;top:819.2px;color:#111">329,09</div>
<div class="a" style="left:1756px;top:797px;width:1px;height:19px;background:#a5b6cc"></div>
<div class="a" style="left:1756px;top:816px;width:1px;height:20px;background:#d5dde8"></div>
<div class="t c " style="left:1756px;width:139px;top:798.2px;color:#2a3a57;font-weight:bold;letter-spacing:0">Dic</div>
<div class="t r " style="left:1692px;width:200px;top:819.2px;color:#111">389,86</div>
<div class="a" style="left:283px;top:835px;width:1612px;height:1px;background:#d5dde8"></div>
<div class="a" style="left:277px;top:852px;width:1624px;height:157px;border:1px solid #9aa0a8;background:#fefefe"></div>
<div class="a" style="left:314px;top:863px;width:1452px;height:133px;border:1px solid #a8abb0;border-left-color:#888;border-bottom-color:#999;background:#fff"></div>
<div class="a" style="left:315px;top:956px;width:1450px;height:1px;background:#c8c8c8"></div>
<div class="a" style="left:309px;top:956px;width:5px;height:1px;background:#888"></div>
<div class="t r " style="left:103px;width:200px;top:948.7px;color:#111;letter-spacing:0">100</div>
<div class="a" style="left:315px;top:918px;width:1450px;height:1px;background:#c8c8c8"></div>
<div class="a" style="left:309px;top:918px;width:5px;height:1px;background:#888"></div>
<div class="t r " style="left:103px;width:200px;top:910.7px;color:#111;letter-spacing:0">200</div>
<div class="a" style="left:315px;top:879px;width:1450px;height:1px;background:#c8c8c8"></div>
<div class="a" style="left:309px;top:879px;width:5px;height:1px;background:#888"></div>
<div class="t r " style="left:103px;width:200px;top:871.7px;color:#111;letter-spacing:0">300</div>
<div class="a" style="left:309px;top:995px;width:5px;height:1px;background:#888"></div>
<div class="t r " style="left:103px;width:200px;top:987.7px;color:#111;letter-spacing:0">0</div>
<div class="a" style="left:311px;top:982px;width:3px;height:1px;background:#999"></div>
<div class="a" style="left:311px;top:970px;width:3px;height:1px;background:#999"></div>
<div class="a" style="left:311px;top:944px;width:3px;height:1px;background:#999"></div>
<div class="a" style="left:311px;top:931px;width:3px;height:1px;background:#999"></div>
<div class="a" style="left:311px;top:905px;width:3px;height:1px;background:#999"></div>
<div class="a" style="left:311px;top:892px;width:3px;height:1px;background:#999"></div>
<div class="a" style="left:311px;top:866px;width:3px;height:1px;background:#999"></div>
<div class="a" style="left:339px;top:875px;width:72px;height:120px;background:#4f81bd"></div>
<div class="a" style="left:460px;top:890px;width:72px;height:105px;background:#4f81bd"></div>
<div class="a" style="left:581px;top:888px;width:72px;height:107px;background:#4f81bd"></div>
<div class="a" style="left:702px;top:908px;width:72px;height:87px;background:#4f81bd"></div>
<div class="a" style="left:823px;top:917px;width:72px;height:78px;background:#4f81bd"></div>
<div class="a" style="left:944px;top:932px;width:72px;height:63px;background:#4f81bd"></div>
<div class="a" style="left:1064px;top:944px;width:72px;height:51px;background:#4f81bd"></div>
<div class="a" style="left:1185px;top:945px;width:72px;height:50px;background:#4f81bd"></div>
<div class="a" style="left:1306px;top:929px;width:72px;height:66px;background:#4f81bd"></div>
<div class="a" style="left:1427px;top:912px;width:72px;height:83px;background:#4f81bd"></div>
<div class="a" style="left:1548px;top:896px;width:72px;height:99px;background:#4f81bd"></div>
<div class="a" style="left:1669px;top:878px;width:72px;height:117px;background:#4f81bd"></div>
<div class="a" style="left:1776px;top:863px;width:114px;height:22px;border:1px solid #c8c8c8;background:#fff"></div>
<div class="a" style="left:1780px;top:867px;width:18px;height:14px;background:#4f81bd;border:1px solid #47709f"></div>
<div class="t " style="left:1803px;top:866.7px;color:#111;letter-spacing:-0.05px">Fabbisogno kWh</div>
<!--/MAIN-->
</body></html>
